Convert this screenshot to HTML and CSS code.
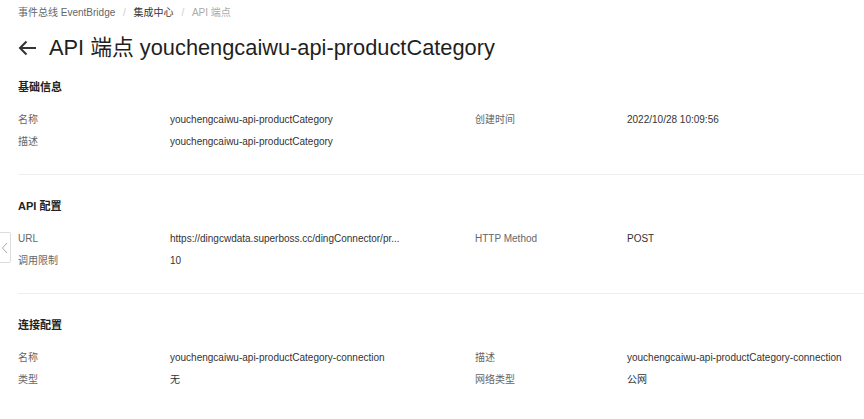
FILE: index.html
```html
<!DOCTYPE html>
<html lang="zh-CN">
<head>
  <meta charset="UTF-8">
  <title>API 端点</title>
  <link rel="stylesheet" href="styles.css">
</head>
<body>

  <!-- collapse tab on the left edge -->
  <div class="side-tab">
    <svg width="8" height="12" viewBox="0 0 8 12"><path d="M6 1 L1.5 6 L6 11" fill="none" stroke="#aaa" stroke-width="1"/></svg>
  </div>

  <div class="page">
    <div class="breadcrumb">
      <span>事件总线 EventBridge</span>
      <span class="sep">/</span>
      <span class="link">集成中心</span>
      <span class="sep">/</span>
      <span class="current">API 端点</span>
    </div>

    <h1 class="title">
      <svg class="back" width="19" height="16" viewBox="0 0 19 16"><path d="M18 8 H2 M8.5 1.5 L2 8 L8.5 14.5" fill="none" stroke="#333" stroke-width="2"/></svg>
      <span>API 端点 youchengcaiwu-api-productCategory</span>
    </h1>

    <!-- 基础信息 -->
    <section class="block first">
      <h2>基础信息</h2>
      <div class="grid">
        <div class="label">名称</div>
        <div class="value">youchengcaiwu-api-productCategory</div>
        <div class="label">创建时间</div>
        <div class="value">2022/10/28 10:09:56</div>
        <div class="label">描述</div>
        <div class="value">youchengcaiwu-api-productCategory</div>
      </div>
    </section>

    <!-- API 配置 -->
    <section class="block">
      <h2>API 配置</h2>
      <div class="grid">
        <div class="label">URL</div>
        <div class="value">https://dingcwdata.superboss.cc/dingConnector/pr...</div>
        <div class="label">HTTP Method</div>
        <div class="value">POST</div>
        <div class="label">调用限制</div>
        <div class="value">10</div>
      </div>
    </section>

    <!-- 连接配置 -->
    <section class="block last">
      <h2>连接配置</h2>
      <div class="grid">
        <div class="label">名称</div>
        <div class="value">youchengcaiwu-api-productCategory-connection</div>
        <div class="label">描述</div>
        <div class="value">youchengcaiwu-api-productCategory-connection</div>
        <div class="label">类型</div>
        <div class="value">无</div>
        <div class="label">网络类型</div>
        <div class="value">公网</div>
      </div>
    </section>
  </div>

</body>
</html>
```

FILE: styles.css
```css
body {
  margin: 0;
  font-family: "Liberation Sans", "Noto Sans CJK SC", sans-serif;
  color: #333;
  background: #fff;
  overflow: hidden;
}
.page {
  padding: 5px 0 0 18px;
}
.breadcrumb {
  font-size: 10px;
  color: #666;
  line-height: 16px;
}
.breadcrumb .sep {
  color: #ccc;
  margin: 0 5px;
}
.breadcrumb .link {
  color: #333;
}
.breadcrumb .current {
  color: #aaa;
}
.title {
  display: flex;
  align-items: center;
  gap: 12px;
  margin: 13px 0 0;
  font-size: 21.8px;
  font-weight: normal;
  line-height: 28px;
  color: #1f1f1f;
}
.block {
  border-bottom: 1px solid #eee;
  padding: 22px 0 24px;
}
.block.first {
  padding-top: 16px;
}
.block.last {
  border-bottom: none;
}
.block h2 {
  margin: 0 0 16px;
  font-size: 11px;
  font-weight: bold;
  line-height: 18px;
  color: #222;
}
.grid {
  display: grid;
  grid-template-columns: 152px 305px 152px 1fr;
  row-gap: 6px;
  font-size: 10px;
  line-height: 16px;
}
.label {
  color: #666;
}
.value {
  color: #333;
  white-space: nowrap;
}
.side-tab {
  position: absolute;
  left: -1px;
  top: 232px;
  width: 11px;
  height: 29px;
  border: 1px solid #ddd;
  border-left: none;
  border-radius: 0 2px 2px 0;
  background: #fff;
  display: flex;
  align-items: center;
  justify-content: center;
}
```
